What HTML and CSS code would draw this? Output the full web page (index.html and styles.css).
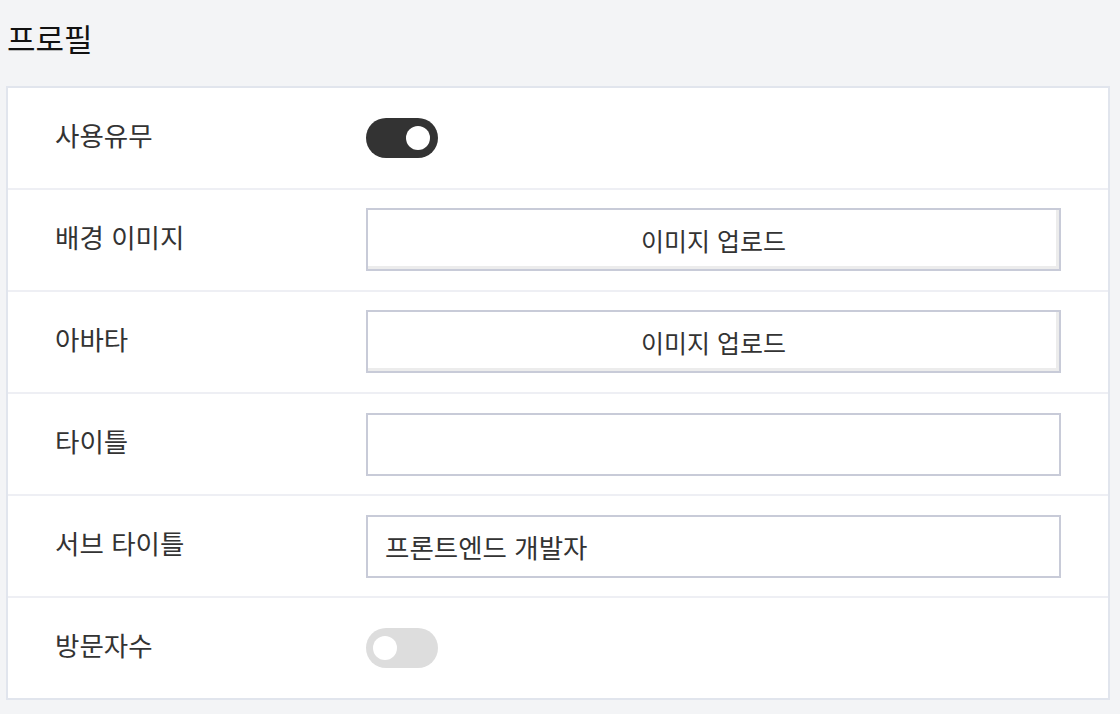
FILE: index.html
```html
<!DOCTYPE html>
<html lang="ko">
<head>
<meta charset="utf-8">
<title>프로필</title>
<link rel="stylesheet" href="styles.css">
</head>
<body>
<h1 class="page-title">프로필</h1>
<section class="card">
  <div class="row">
    <div class="label">사용유무</div>
    <div class="control"><span class="toggle on"><span class="knob"></span></span></div>
  </div>
  <div class="row">
    <div class="label">배경 이미지</div>
    <div class="control"><button class="upload" type="button">이미지 업로드</button></div>
  </div>
  <div class="row">
    <div class="label">아바타</div>
    <div class="control"><button class="upload" type="button">이미지 업로드</button></div>
  </div>
  <div class="row">
    <div class="label">타이틀</div>
    <div class="control"><input class="text-input" type="text" value=""></div>
  </div>
  <div class="row">
    <div class="label">서브 타이틀</div>
    <div class="control"><input class="text-input" type="text" value="프론트엔드 개발자"></div>
  </div>
  <div class="row">
    <div class="label">방문자수</div>
    <div class="control"><span class="toggle off"><span class="knob"></span></span></div>
  </div>
</section>
</body>
</html>
```

FILE: styles.css
```css
html, body {
  margin: 0;
  padding: 0;
  background: #f3f4f6;
}
body {
  font-family: "Noto Sans CJK KR", "Noto Sans", sans-serif;
  color: #333333;
  height: 714px;
  overflow: hidden;
}
.page-title {
  margin: 0;
  padding: 16px 0 0 7px;
  height: 68px;
  box-sizing: border-box;
  font-size: 31px;
  font-weight: 400;
  line-height: 44px;
  color: #111111;
}
.card {
  margin: 18px 10px 0 6px;
  background: #ffffff;
  border: 2px solid #e1e5ed;
}
.row {
  display: grid;
  grid-template-columns: 311px 1fr;
  align-items: center;
  height: 100px;
  padding: 0 47px;
  border-bottom: 2px solid #eeeff4;
}
.row:last-child {
  border-bottom: none;
}
.label {
  font-size: 26.5px;
  line-height: 34px;
  color: #333333;
  margin-top: -6px;
}
.control {
  display: flex;
  align-items: center;
}
.toggle {
  position: relative;
  display: inline-block;
  width: 72px;
  height: 40px;
  border-radius: 20px;
}
.toggle.on { background: #333333; }
.toggle.off { background: #dddddd; }
.knob {
  position: absolute;
  top: 8px;
  width: 24px;
  height: 24px;
  border-radius: 50%;
  background: #ffffff;
}
.toggle.on .knob { right: 8px; }
.toggle.off .knob { left: 7px; }
.upload {
  width: 100%;
  height: 63px;
  margin: -1px 0 0 0;
  padding: 0;
  background: #ffffff;
  border: 2px solid #c8cbd8;
  box-shadow: inset -3px -3px 0 #ececec;
  font-family: inherit;
  font-size: 25px;
  color: #333333;
  cursor: pointer;
}
.text-input {
  width: 100%;
  height: 63px;
  box-sizing: border-box;
  margin: 0;
  padding: 0 17px;
  background: #ffffff;
  border: 2px solid #c8cbd8;
  border-radius: 0;
  font-family: inherit;
  font-size: 26.5px;
  color: #333333;
  outline: none;
}
```
